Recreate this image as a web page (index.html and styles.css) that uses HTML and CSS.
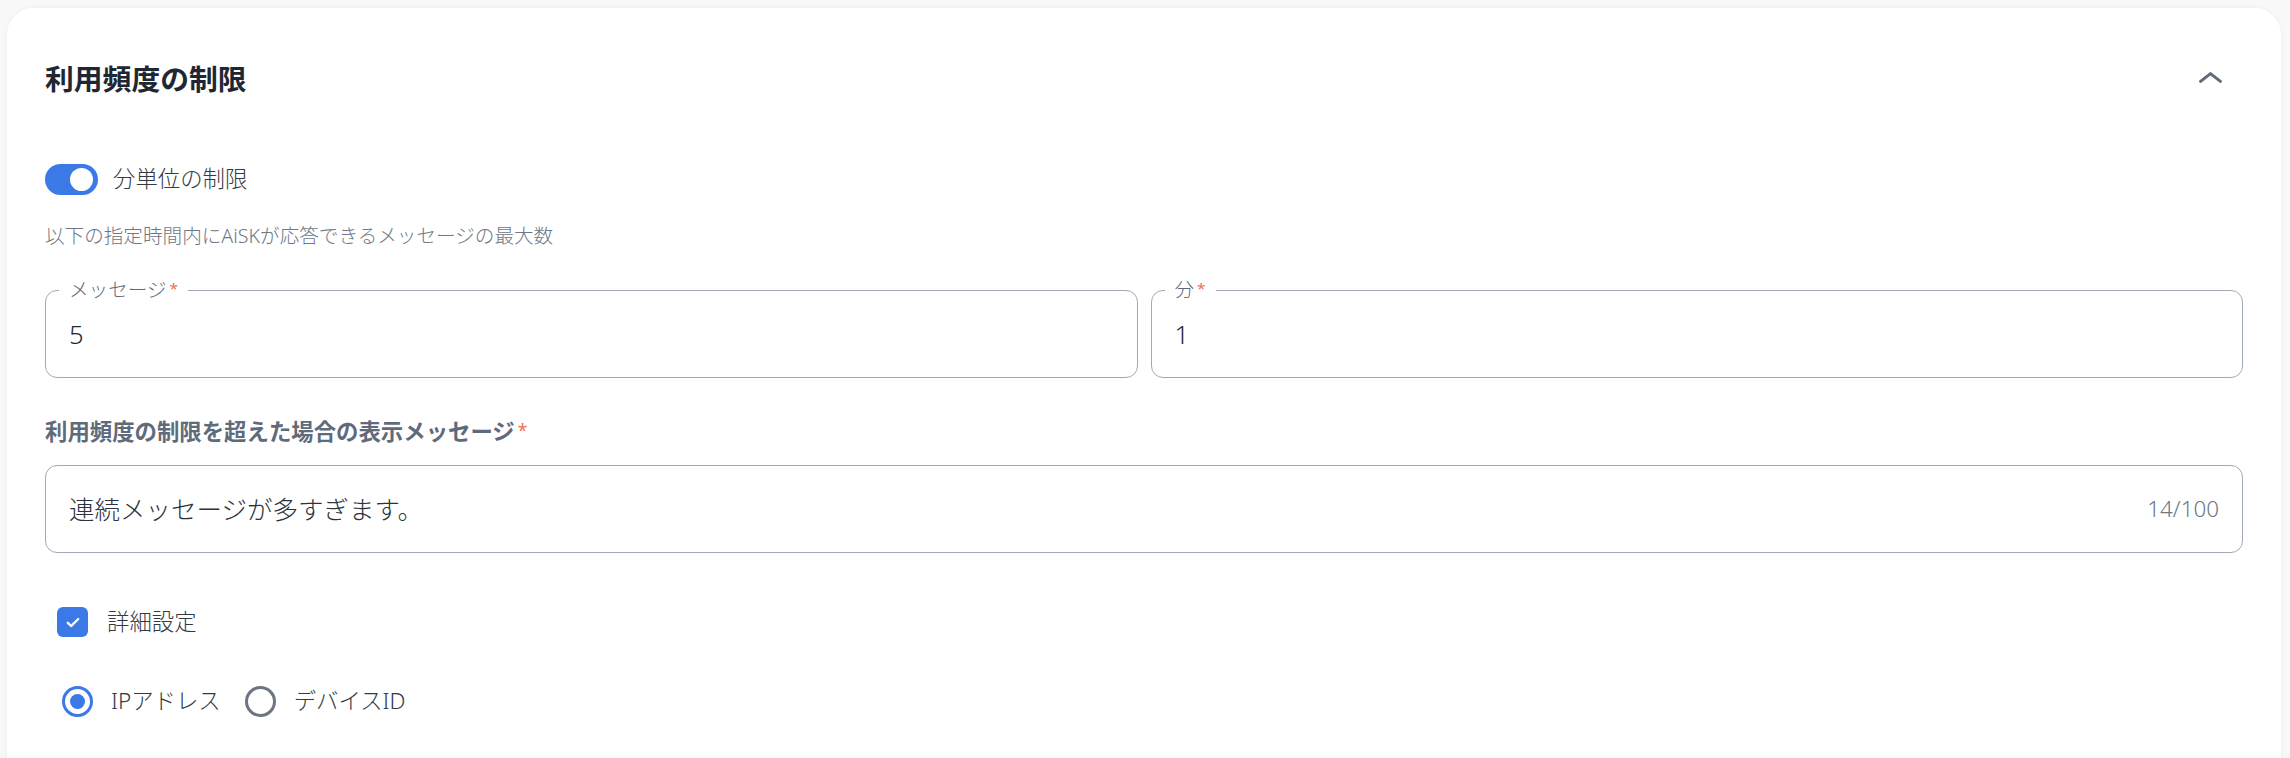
FILE: index.html
```html
<!DOCTYPE html>
<html lang="ja">
<head>
<meta charset="utf-8">
<title>利用頻度の制限</title>
<link rel="stylesheet" href="styles.css">
</head>
<body>
<div class="page">
  <section class="card">
    <header class="card-head">
      <h2 class="card-title">利用頻度の制限</h2>
      <button class="collapse-btn" type="button" aria-label="折りたたむ">
        <svg width="23" height="11" viewBox="0 0 23 11" aria-hidden="true"><polyline points="1.6,9.4 11.5,1.6 21.4,9.4" fill="none" stroke="#5f6b7a" stroke-width="3" stroke-linecap="round" stroke-linejoin="round"/></svg>
      </button>
    </header>

    <div class="switch-row">
      <span class="switch"><span class="switch-knob"></span></span>
      <span class="switch-label">分単位の制限</span>
    </div>

    <p class="hint">以下の指定時間内にAiSKが応答できるメッセージの最大数</p>

    <div class="field-grid">
      <div class="outlined">
        <span class="float-label">メッセージ<span class="req">*</span></span>
        <span class="value">5</span>
      </div>
      <div class="outlined">
        <span class="float-label">分<span class="req">*</span></span>
        <span class="value">1</span>
      </div>
    </div>

    <div class="field-label">利用頻度の制限を超えた場合の表示メッセージ<span class="req">*</span></div>
    <div class="outlined textbox">
      <span class="value text-value">連続メッセージが多すぎます。</span>
      <span class="counter">14/100</span>
    </div>

    <div class="check-row">
      <span class="checkbox">
        <svg width="14" height="11" viewBox="0 0 14 11" aria-hidden="true"><polyline points="1.8,5.8 5.2,9 12.2,2" fill="none" stroke="#ffffff" stroke-width="2.4" stroke-linecap="round" stroke-linejoin="round"/></svg>
      </span>
      <span class="check-label">詳細設定</span>
    </div>

    <div class="radio-row">
      <span class="radio-item">
        <span class="radio radio-on"><span class="radio-dot"></span></span>
        <span class="radio-label">IPアドレス</span>
      </span>
      <span class="radio-item">
        <span class="radio radio-off"></span>
        <span class="radio-label">デバイスID</span>
      </span>
    </div>
  </section>
</div>
</body>
</html>
```

FILE: styles.css
```css
* { box-sizing: border-box; }

html, body {
  margin: 0;
  padding: 0;
  height: 758px;
  overflow: hidden;
  background: #f8f8f8;
  font-family: "Noto Sans", "Noto Sans CJK JP", sans-serif;
  font-weight: 300;
}

.page {
  padding: 8px 9px 0 7px;
}

.card {
  background: #ffffff;
  border-radius: 26px;
  box-shadow: 0 0 5px rgba(0, 0, 0, 0.05);
  padding: 51px 38px 80px 38px;
  min-height: 800px;
}

.card-head {
  display: flex;
  align-items: center;
  justify-content: space-between;
  height: 40px;
}

.card-title {
  margin: 0;
  font-size: 28.8px;
  line-height: 40px;
  font-weight: 700;
  color: #1f2733;
}

.collapse-btn {
  width: 40px;
  height: 40px;
  margin-right: 13px;
  margin-top: -3px;
  border: 0;
  padding: 0;
  background: transparent;
  display: flex;
  align-items: center;
  justify-content: center;
}

.switch-row {
  margin-top: 64px;
  display: flex;
  align-items: center;
  height: 32px;
}

.switch {
  width: 53px;
  height: 31px;
  border-radius: 16px;
  background: #3b7ae6;
  display: flex;
  align-items: center;
  justify-content: flex-end;
  padding: 0 5px;
}

.switch-knob {
  width: 23px;
  height: 23px;
  border-radius: 50%;
  background: #ffffff;
}

.switch-label {
  margin-left: 15px;
  font-size: 22.4px;
  line-height: 32px;
  color: #333a44;
}

.hint {
  margin: 28px 0 0 0;
  font-size: 19.6px;
  line-height: 26px;
  color: #6e7886;
}

.field-grid {
  margin-top: 41px;
  display: grid;
  grid-template-columns: 1fr 1fr;
  gap: 13px;
}

.outlined {
  position: relative;
  height: 88px;
  border: 1px solid #a1a9b5;
  border-radius: 12px;
  display: flex;
  align-items: center;
  padding: 0 23px;
}

.float-label {
  position: absolute;
  top: -14px;
  left: 13px;
  padding: 0 10px 0 10px;
  background: #ffffff;
  font-size: 19.6px;
  line-height: 26px;
  color: #5f6b7a;
}

.req {
  color: #f0704e;
  margin-left: 3px;
  font-size: 0.78em;
  vertical-align: 0.18em;
  line-height: 0;
  font-weight: 400;
}

.value {
  font-size: 25.5px;
  line-height: 34px;
  color: #1f2733;
}

.field-label {
  margin-top: 39px;
  font-size: 22.4px;
  line-height: 30px;
  font-weight: 700;
  color: #5f6b7a;
}

.textbox {
  margin-top: 18px;
  justify-content: space-between;
}

.text-value {
  color: #2c333d;
}

.counter {
  font-size: 22.4px;
  line-height: 28px;
  color: #6e7886;
}

.check-row {
  margin-top: 54px;
  margin-left: 12px;
  display: flex;
  align-items: center;
  height: 30px;
}

.checkbox {
  width: 31px;
  height: 30px;
  border-radius: 6px;
  background: #3b7ae6;
  display: flex;
  align-items: center;
  justify-content: center;
}

.check-label {
  margin-left: 19px;
  font-size: 22.4px;
  line-height: 30px;
  color: #333a44;
}

.radio-row {
  margin-top: 48px;
  margin-left: 17px;
  display: flex;
  align-items: center;
  height: 32px;
}

.radio-item {
  display: flex;
  align-items: center;
}

.radio-item + .radio-item {
  margin-left: 24px;
}

.radio {
  width: 31px;
  height: 31px;
  border-radius: 50%;
  border: 3px solid #3b7ae6;
  display: flex;
  align-items: center;
  justify-content: center;
}

.radio-off {
  border-color: #6b7583;
}

.radio-dot {
  width: 15px;
  height: 15px;
  border-radius: 50%;
  background: #3b7ae6;
}

.radio-label {
  margin-left: 18px;
  font-size: 22.4px;
  line-height: 32px;
  color: #333a44;
}
```
